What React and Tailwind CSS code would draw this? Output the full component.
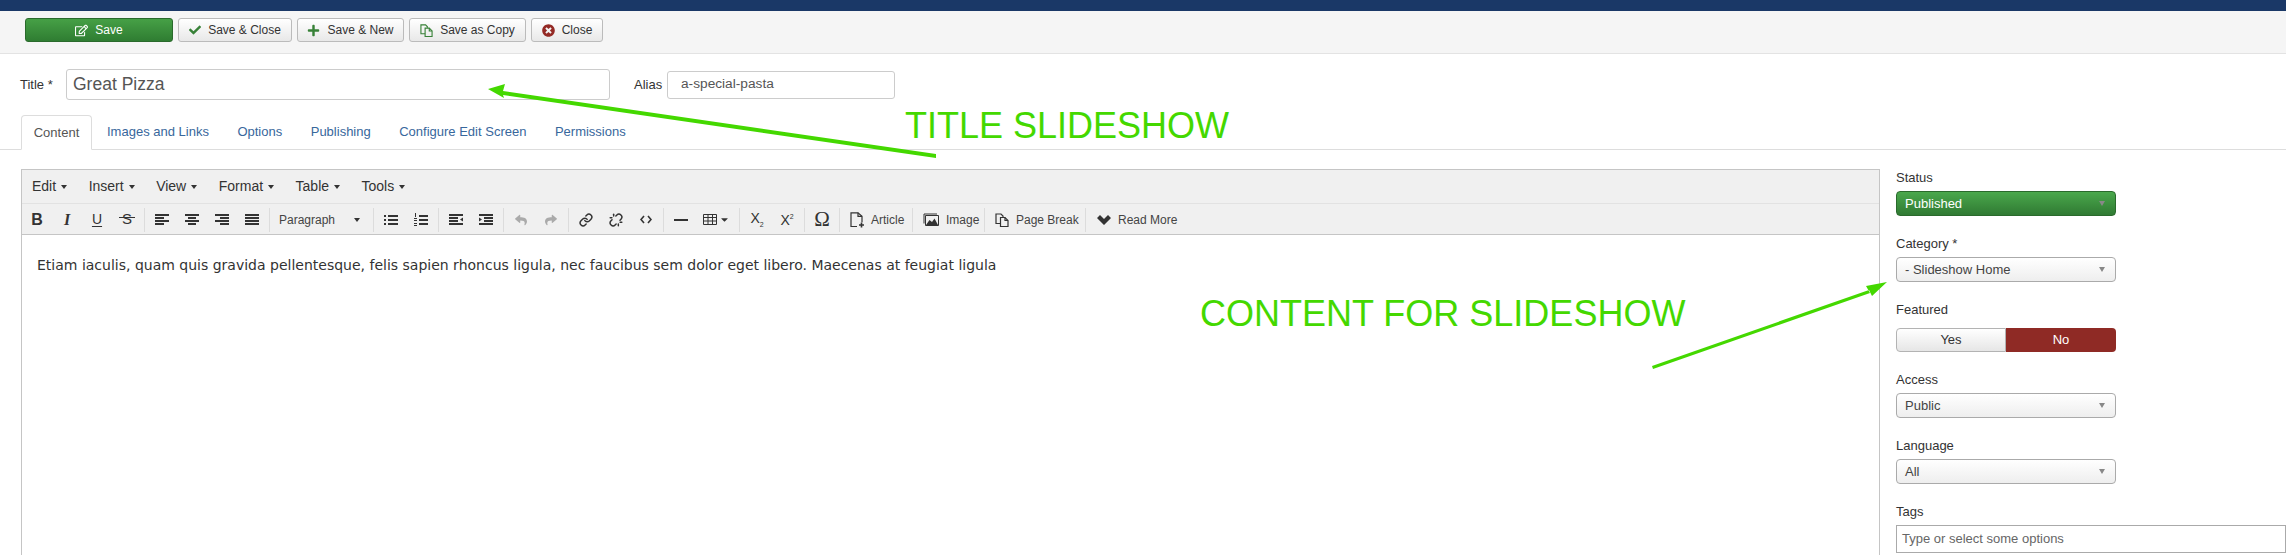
import { FaCheck, FaPlus, FaTimesCircle, FaRegEdit, FaReply, FaShare, FaCaretDown } from "react-icons/fa";
import { Link, Unlink } from "lucide-react";

function ToolBtn({ icon, label, className = "" }) {
  return (
    <button className={`h-[24px] flex items-center justify-center gap-[7px] rounded-[3px] border border-[#bbb] bg-gradient-to-b text-[12px] whitespace-nowrap ${className}`}>
      {icon}
      {label}
    </button>
  );
}

function Lines({ rows }) {
  return (
    <svg width="14" height="11" viewBox="0 0 14 11" fill="#333">
      {rows.map((r, i) => (
        <rect key={i} x={r[0]} y={i * 3} width={r[1]} height="2" />
      ))}
    </svg>
  );
}

function Sep() {
  return <div className="w-px h-[24px] bg-[#dcdcdc] mx-[2px]" />;
}

function Cell({ children, w = "w-[30px]" }) {
  return <div className={`${w} h-[24px] flex items-center justify-center text-[#333]`}>{children}</div>;
}

function Caret() {
  return <span className="w-0 h-0 border-x-[3.5px] border-x-transparent border-t-[4px] border-t-[#333]" />;
}

function Pages({ stroke = "#333", size = 14 }) {
  return (
    <svg width={size} height={size} viewBox="0 0 14 14" fill="none" stroke={stroke} strokeWidth="1.2">
      <path d="M5.5 10.5H1V1h5l2 2v1" />
      <path d="M5.5 4.5H10l3 3v6H5.5z" />
      <path d="M10 4.5v3h3" />
    </svg>
  );
}

function TextBtn({ icon, label, className = "" }) {
  return (
    <div className={`flex items-center gap-[7px] text-[12px] text-[#444] ${className}`}>
      {icon}
      {label}
    </div>
  );
}

function Select({ value, green }) {
  return (
    <div className={`h-[25px] w-[220px] rounded-[4px] border flex items-center justify-between pl-[8px] pr-[10px] text-[13px] bg-gradient-to-b ${green ? "border-[#2a6a2c] from-[#4aa84c] to-[#307a33] text-white" : "border-[#aaa] from-white to-[#eeeeee] text-[#444]"}`}>
      {value}
      <span className="w-0 h-0 border-x-[3.5px] border-x-transparent border-t-[5px] border-t-[#888]" />
    </div>
  );
}

function Field({ label, children }) {
  return (
    <div className="flex flex-col gap-[6px]">
      <div className="text-[13px] leading-[15px] text-[#333]">{label}</div>
      {children}
    </div>
  );
}

export default function App() {
  return (
    <div className="relative w-[2286px] h-[555px] overflow-hidden bg-white font-['Liberation_Sans',Arial,sans-serif]">
      <div className="h-[11px] bg-[#1a3867]" />

      {/* toolbar */}
      <div className="h-[43px] bg-[#f5f5f5] border-b border-[#e3e3e3] flex items-start pt-[7px] pl-[25px] gap-[5px]">
        <ToolBtn
          className="w-[148px] !border-[#2a6a2c] from-[#46a046] to-[#2f7d32] text-white"
          icon={<FaRegEdit size={13} />}
          label="Save"
        />
        <ToolBtn className="w-[114px] from-white to-[#e8e8e8] text-[#333]" icon={<FaCheck size={12} color="#378137" />} label="Save & Close" />
        <ToolBtn className="w-[107px] from-white to-[#e8e8e8] text-[#333]" icon={<FaPlus size={13} color="#378137" />} label="Save & New" />
        <ToolBtn className="w-[117px] from-white to-[#e8e8e8] text-[#333]" icon={<Pages stroke="#378137" size={13} />} label="Save as Copy" />
        <ToolBtn className="w-[72px] from-white to-[#e8e8e8] text-[#333]" icon={<FaTimesCircle size={13} color="#942a25" />} label="Close" />
      </div>

      {/* title row */}
      <div className="flex items-center h-[31px] mt-[15px] pl-[20px] text-[13px] text-[#333]">
        <div className="w-[46px]">Title *</div>
        <div className="w-[544px] h-[31px] border border-[#ccc] rounded-[3px] flex items-center px-[6px] text-[17.5px] text-[#555]">Great Pizza</div>
        <div className="ml-[24px] w-[33px]">Alias</div>
        <div className="w-[228px] h-[28px] border border-[#ccc] rounded-[3px] flex items-center pl-[13px] text-[13.7px] text-[#555]">a-special-pasta</div>
      </div>

      {/* tabs */}
      <div className="flex mt-[15px] pl-[21px] h-[35px] border-b border-[#ddd] text-[13px] text-[#38679c]">
        <div className="h-[35px] w-[71px] border border-[#ddd] border-b-white rounded-t-[4px] bg-white text-[#555] flex items-center justify-center">Content</div>
        <div className="h-[34px] flex items-center ml-[15px] gap-[28.5px]">
          <span>Images and Links</span>
          <span>Options</span>
          <span>Publishing</span>
          <span>Configure Edit Screen</span>
          <span>Permissions</span>
        </div>
      </div>

      {/* main */}
      <div className="flex mt-[19px] pl-[21px]">
        <div className="w-[1859px] h-[400px] border border-[#c5c5c5] border-b-0">
          <div className="h-[34px] bg-[#f0f0f0] border-b border-[#e2e2e2] flex items-center pl-[10px] gap-[21.5px] text-[14px] text-[#333]">
            {["Edit", "Insert", "View", "Format", "Table", "Tools"].map((m) => (
              <span key={m} className="flex items-center gap-[5px]">
                {m}
                <Caret />
              </span>
            ))}
          </div>
          <div className="h-[31px] bg-[#f0f0f0] border-b border-[#c5c5c5] flex items-center pt-px text-[#333]">
            <Cell><span className="text-[16px] font-bold">B</span></Cell>
            <Cell><span className="text-[16px] italic font-bold font-['Liberation_Serif',serif]">I</span></Cell>
            <Cell><span className="text-[14px] underline underline-offset-2">U</span></Cell>
            <Cell>
              <span className="relative text-[15px]">
                S
                <span className="absolute left-[-3px] right-[-3px] top-[9px] h-px bg-[#333]" />
              </span>
            </Cell>
            <Sep />
            <Cell><Lines rows={[[0, 14], [0, 9], [0, 14], [0, 9]]} /></Cell>
            <Cell><Lines rows={[[0, 14], [3, 8], [0, 14], [3, 8]]} /></Cell>
            <Cell><Lines rows={[[0, 14], [5, 9], [0, 14], [5, 9]]} /></Cell>
            <Cell><Lines rows={[[0, 14], [0, 14], [0, 14], [0, 14]]} /></Cell>
            <Sep />
            <div className="w-[99px] flex items-center justify-between pl-[7px] pr-[11px] text-[12px] text-[#444]">
              Paragraph
              <Caret />
            </div>
            <Sep />
            <Cell>
              <svg width="14" height="12" viewBox="0 0 14 12" fill="#333">
                <rect x="0" y="1" width="2" height="2" /><rect x="4" y="1" width="10" height="2" />
                <rect x="0" y="5" width="2" height="2" /><rect x="4" y="5" width="10" height="2" />
                <rect x="0" y="9" width="2" height="2" /><rect x="4" y="9" width="10" height="2" />
              </svg>
            </Cell>
            <Cell>
              <svg width="14" height="14" viewBox="0 0 14 14" fill="#333">
                <rect x="1" y="0" width="1" height="4" /><rect x="0" y="5" width="3" height="1" /><rect x="0" y="7" width="3" height="1" /><rect x="0" y="10" width="3" height="1" /><rect x="0" y="12" width="3" height="1" />
                <rect x="5" y="2" width="9" height="2" /><rect x="5" y="6" width="9" height="2" /><rect x="5" y="10" width="9" height="2" />
              </svg>
            </Cell>
            <Sep />
            <Cell>
              <svg width="14" height="11" viewBox="0 0 14 11" fill="#333">
                <rect width="14" height="2" /><rect y="3" width="9" height="2" /><rect y="6" width="9" height="2" /><rect y="9" width="14" height="2" />
                <path d="M14 3.5v4l-3-2z" />
              </svg>
            </Cell>
            <Cell>
              <svg width="14" height="11" viewBox="0 0 14 11" fill="#333">
                <rect width="14" height="2" /><rect x="5" y="3" width="9" height="2" /><rect x="5" y="6" width="9" height="2" /><rect y="9" width="14" height="2" />
                <path d="M0 3.5v4l3-2z" />
              </svg>
            </Cell>
            <Sep />
            <Cell><FaReply size={12} color="#aaa" /></Cell>
            <Cell><FaShare size={12} color="#aaa" /></Cell>
            <Sep />
            <Cell><Link size={14} strokeWidth={2.5} /></Cell>
            <Cell><Unlink size={14} strokeWidth={2.5} /></Cell>
            <Cell>
              <svg width="12" height="9" viewBox="0 0 12 9" fill="none" stroke="#333" strokeWidth="1.6">
                <path d="M4 1 1 4.5 4 8M8 1l3 3.5L8 8" />
              </svg>
            </Cell>
            <Sep />
            <Cell><div className="w-[14px] h-[2px] bg-[#333]" /></Cell>
            <Cell w="w-[41px]">
              <svg width="14" height="11" viewBox="0 0 14 11" fill="none" stroke="#333">
                <path d="M.5.5h13v10H.5zM.5 3.5h13M.5 7h13M5 .5v10M9.500 .5v10" />
              </svg>
              <FaCaretDown size={11} className="ml-[2px]" />
            </Cell>
            <Sep />
            <Cell><span className="text-[14px] leading-none">X<span className="text-[7px] align-sub">2</span></span></Cell>
            <Cell><span className="text-[14px] leading-none">X<span className="text-[7px] align-top">2</span></span></Cell>
            <Sep />
            <Cell><span className="text-[21px] leading-none font-['Liberation_Serif',serif]">Ω</span></Cell>
            <Sep />
            <TextBtn
              className="pl-[8px] w-[68px]"
              label="Article"
              icon={
                <svg width="14" height="16" viewBox="0 0 14 16" fill="none" stroke="#333" strokeWidth="1.2">
                  <path d="M7 14.500H1V.8h7l4 3.500v6" />
                  <path d="M8 .8v3.500h4" />
                  <path d="M9 13h5M11.500 10.500v5" strokeWidth="1.6" />
                </svg>
              }
            />
            <Sep />
            <TextBtn
              className="pl-[8px] w-[67px] gap-[5px]"
              label="Image"
              icon={
                <svg width="16" height="13" viewBox="0 0 16 13" fill="none" stroke="#333">
                  <path d="M1 10.500V1h13" />
                  <path d="M2.500 2.500h13v10h-13z" />
                  <path d="M3 12l3.500-5 2.500 2 2.500-3.500L15 12z" fill="#333" stroke="none" />
                </svg>
              }
            />
            <Sep />
            <TextBtn className="pl-[8px] w-[96px]" label="Page Break" icon={<Pages size={14} />} />
            <Sep />
            <TextBtn
              className="pl-[9px] gap-[7px]"
              label="Read More"
              icon={
                <svg width="14" height="11" viewBox="0 0 14 11" fill="#333">
                  <path d="M0 4 3 1l4 4 4-4 3 3-7 7z" />
                </svg>
              }
            />
          </div>
          <div className="pt-[20px] pl-[15px] text-[14px] leading-[20px] text-[#333] font-['DejaVu_Sans',sans-serif]">
            Etiam iaculis, quam quis gravida pellentesque, felis sapien rhoncus ligula, nec faucibus sem dolor eget libero. Maecenas at feugiat ligula
          </div>
        </div>

        {/* sidebar */}
        <div className="flex-1 pl-[16px] pt-px flex flex-col gap-[20px]">
          <Field label="Status"><Select value="Published" green /></Field>
          <Field label="Category *"><Select value="- Slideshow Home" /></Field>
          <Field label="Featured">
            <div className="flex w-[220px] h-[24px] text-[13px] mt-[5px]">
              <div className="w-[110px] flex items-center justify-center border border-[#b3b3b3] rounded-l-[4px] bg-gradient-to-b from-white to-[#e6e6e6] text-[#333]">Yes</div>
              <div className="w-[110px] flex items-center justify-center rounded-r-[4px] bg-[#8f2a25] text-white">No</div>
            </div>
          </Field>
          <Field label="Access"><Select value="Public" /></Field>
          <Field label="Language"><Select value="All" /></Field>
          <Field label="Tags">
            <div className="h-[28px] border border-[#aaa] flex items-center pl-[5px] text-[13px] text-[#666]">Type or select some options</div>
          </Field>
        </div>
      </div>

      {/* annotations drawn over the screenshot */}
      <svg className="absolute inset-0 pointer-events-none" width="2286" height="555" fill="#44d800">
        <polygon points="488,89 505,84 503,91 936,154 936,158 503,95 504,98" />
        <polygon points="1887,282 1872,296 1869,290 1652,366 1653,369 1870,293 1866,286" />
      </svg>
      <div className="absolute left-[905px] top-[105px] text-[36px] leading-[42px] text-[#44d800] whitespace-nowrap">TITLE SLIDESHOW</div>
      <div className="absolute left-[1200px] top-[293px] text-[36px] leading-[42px] text-[#44d800] whitespace-nowrap">CONTENT FOR SLIDESHOW</div>
    </div>
  );
}
